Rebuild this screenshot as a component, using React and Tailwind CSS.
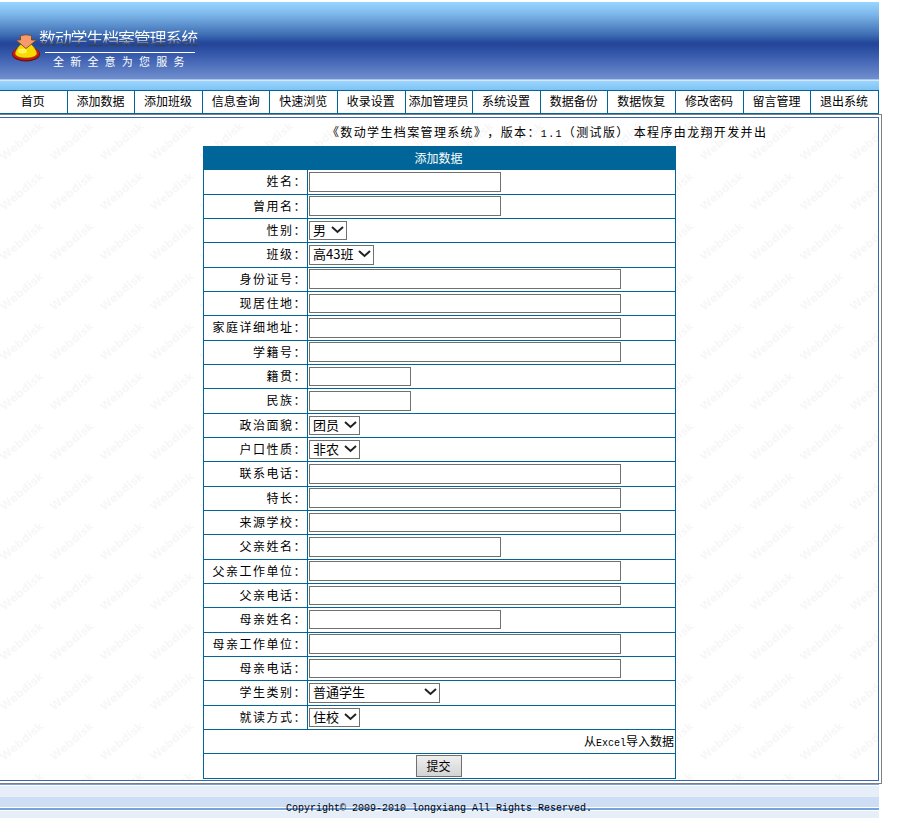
import React from 'react';

const navItems = [
    '首页', '添加数据', '添加班级', '信息查询', '快速浏览', '收录设置', '添加管理员',
    '系统设置', '数据备份', '数据恢复', '修改密码', '留言管理', '退出系统',
];

const fields = [
    { label: '姓名', type: 'input', width: 'w-[192px]' },
    { label: '曾用名', type: 'input', width: 'w-[192px]' },
    { label: '性别', type: 'select', width: 'w-[38px]', value: '男' },
    { label: '班级', type: 'select', width: 'w-[65px]', value: '高43班' },
    { label: '身份证号', type: 'input', width: 'w-[312px]' },
    { label: '现居住地', type: 'input', width: 'w-[312px]' },
    { label: '家庭详细地址', type: 'input', width: 'w-[312px]' },
    { label: '学籍号', type: 'input', width: 'w-[312px]' },
    { label: '籍贯', type: 'input', width: 'w-[102px]' },
    { label: '民族', type: 'input', width: 'w-[102px]' },
    { label: '政治面貌', type: 'select', width: 'w-[51px]', value: '团员' },
    { label: '户口性质', type: 'select', width: 'w-[51px]', value: '非农' },
    { label: '联系电话', type: 'input', width: 'w-[312px]' },
    { label: '特长', type: 'input', width: 'w-[312px]' },
    { label: '来源学校', type: 'input', width: 'w-[312px]' },
    { label: '父亲姓名', type: 'input', width: 'w-[192px]' },
    { label: '父亲工作单位', type: 'input', width: 'w-[312px]' },
    { label: '父亲电话', type: 'input', width: 'w-[312px]' },
    { label: '母亲姓名', type: 'input', width: 'w-[192px]' },
    { label: '母亲工作单位', type: 'input', width: 'w-[312px]' },
    { label: '母亲电话', type: 'input', width: 'w-[312px]' },
    { label: '学生类别', type: 'select', width: 'w-[131px]', value: '普通学生' },
    { label: '就读方式', type: 'select', width: 'w-[51px]', value: '住校' },
];

const Logo = () => (
    <svg className="w-[30px] h-[28px] shrink-0" viewBox="0 0 30 28">
        <ellipse cx="15" cy="20" rx="14" ry="7.500" fill="#5a1a10" />
        <ellipse cx="15" cy="19.500" rx="13.300" ry="6.800" fill="#e01010" />
        <path d="M4 19C5 15 8 12 10 10h10c2 2 5 5 6 9 0 3.500-5 5-11 5S4 22.500 4 19z" fill="#f8dc00" stroke="#7a5a10" strokeWidth=".6" />
        <ellipse cx="11.500" cy="17" rx="4.500" ry="2.500" fill="#fff45a" />
        <path d="M9.500 1.500q5.500-1.500 11 0v4.500h5L15 14.500 5 6h4.500z" fill="#f99a6c" stroke="#6b4a3a" strokeWidth=".9" />
    </svg>
);

const Header = () => (
    <div className="w-[879px] pt-[2px]">
        <div className="h-[77px] flex bg-[linear-gradient(to_bottom,#99d6ff_0%,#7fb9ec_15%,#3f6fb4_42%,#24479b_53%,#24479b_56%,#3d5fb0_72%,#6f8fce_100%)]">
            <div className="pt-[32px] pl-[11px]"><Logo /></div>
            <div className="w-[160px] -ml-[2px] pt-[25px] text-white">
                <div className="h-[25px] w-[160px] text-[17px] leading-[22px] tracking-[-1.2px] whitespace-nowrap bg-[linear-gradient(to_bottom,#ffffff_45%,#3a4048_70%)] bg-clip-text text-transparent">数动学生档案管理系统</div>
                <div className="h-px w-[150px] ml-[6px] bg-white"></div>
                <div className="mt-px ml-[14px] text-[11px] leading-[14px] tracking-[6.2px] whitespace-nowrap">全新全意为您服务</div>
            </div>
        </div>
        <div className="h-[2px] bg-[#d5e6f8] border-t border-[#a9c4ea]"></div>
        <div className="h-[9px] bg-linear-to-b from-[#99d6ff] to-[#7fc2f2]"></div>
    </div>
);

const Nav = () => (
    <div className="w-[879px] h-[24px] flex bg-white border-y border-[#006699]">
        {navItems.map((item) => (
            <div key={item} className="flex-1 min-w-0 pr-px border-r border-[#006699] text-center leading-[20px] whitespace-nowrap">
                {item}
            </div>
        ))}
    </div>
);

const Watermark = () => (
    <svg className="absolute inset-0 w-full h-full" aria-hidden="true">
        <defs>
            <pattern id="webdisk" width="50" height="50" patternUnits="userSpaceOnUse">
                <text x="4" y="43" transform="rotate(-40 4 43)" fontFamily="DejaVu Sans" fontWeight="bold" fontSize="11" fill="#f7f7f7">Webdisk</text>
            </pattern>
        </defs>
        <rect width="100%" height="100%" fill="url(#webdisk)" />
    </svg>
);

const Select = ({ width, value }) => (
    <div className={`relative h-[19.4px] mt-[2px] ${width}`}>
        <select className="block appearance-none w-full h-full border border-[#707070] bg-white pl-[3px] pb-[2px] text-[13px] leading-[15px]">
            <option>{value}</option>
        </select>
        <svg className="absolute right-[3px] top-[5px] w-[13px] h-[8px] pointer-events-none" viewBox="0 0 13 8">
            <path d="M1 1l5.500 5 5.500-5" fill="none" stroke="#222" strokeWidth="2" />
        </svg>
    </div>
);

const FormTable = () => (
    <div className="w-[473px] ml-[203px] border-l border-r border-[#006699] bg-white">
        <div className="h-[24.3px] pr-[2px] bg-[#006699] text-white text-center leading-[24px]">添加数据</div>
        {fields.map((field) => (
            <div key={field.label} className="flex h-[24.33px] border-b border-[#006699]">
                <div className="w-[104px] border-r border-[#006699] text-right tracking-[1.5px] leading-[22px]">{field.label}：</div>
                <div className="flex-1 pl-px">
                    {field.type === 'select' ? (
                        <Select width={field.width} value={field.value} />
                    ) : (
                        <input type="text" className={`block h-[19.6px] mt-[1.7px] border border-[#707070] bg-white px-[2px] ${field.width}`} />
                    )}
                </div>
            </div>
        ))}
        <div className="h-[24.33px] border-b border-[#006699] pr-px text-right leading-[21px]">
            从<span className="font-['Liberation_Mono'] text-[10px]">Excel</span>导入数据
        </div>
        <div className="h-[24.33px] border-b border-[#006699] pr-[2px] flex justify-center">
            <button className="w-[46px] h-[22px] mt-[0.8px] border border-[#707070] bg-linear-to-b from-[#efefef] to-[#d4d4d4] text-[12px] leading-[20px]">提交</button>
        </div>
    </div>
);

const Footer = () => (
    <div className="w-[879px]">
        <div className="h-px bg-[#78a2de]"></div>
        <div className="h-[11px] mt-px bg-[#e6eef8]"></div>
        <div className="h-[10px] bg-[#cdddf3]"></div>
        <div className="h-px"></div>
        <div className="relative h-[2px] bg-[#78a2de]">
            <div className="absolute left-[286px] -top-[6px] font-['Liberation_Mono'] text-[10px] leading-[14px] whitespace-nowrap">
                Copyright© 2009-2010 longxiang All Rights Reserved.
            </div>
        </div>
        <div className="h-[7px] mt-px bg-[#e6eef8]"></div>
    </div>
);

const App = () => {
    return (
        <div className="w-[900px] h-[827px] overflow-hidden bg-white text-black text-[12px] font-['Noto_Sans_CJK_SC',sans-serif]">
            <Header />
            <Nav />
            <div className="w-[882px] h-[670px] border-t border-r border-b border-[#808080] pt-[2px] pr-[2px] pb-[2px]">
                <div className="relative h-full border-t border-r border-b border-[#3a67ac]">
                    <Watermark />
                    <div className="relative">
                        <div className="h-[28px] pl-[327px] leading-[28px] tracking-[1.36px] whitespace-pre [text-spacing-trim:space-all]">
                            《数动学生档案管理系统》，版本：<span className="font-['Liberation_Mono'] text-[10px]">1.1</span>（测试版） 本程序由龙翔开发并出
                        </div>
                        <FormTable />
                    </div>
                </div>
            </div>
            <Footer />
        </div>
    );
};

export default App;
